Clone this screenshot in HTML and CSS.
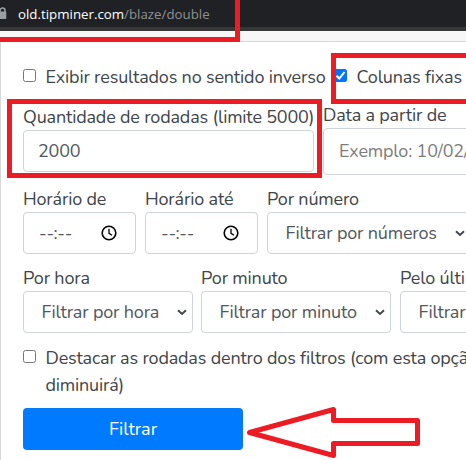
FILE: index.html
```html
<!DOCTYPE html>
<html lang="pt-BR">
<head>
<meta charset="utf-8">
<title>old.tipminer.com/blaze/double</title>
<link rel="stylesheet" href="styles.css">
</head>
<body>
<header class="browser-bar">
  <svg class="lock" width="10" height="13" viewBox="0 0 10 13"><path d="M2 5V3.500a2.500 2.500 0 0 1 5 0V5" fill="none" stroke="#9aa0a6" stroke-width="1.500"/><rect y="4.500" x="-2" width="8.300" height="7.500" rx="1" fill="#9aa0a6" transform="translate(2)"/></svg>
  <span class="url"><span class="host">old.tipminer.com</span><span class="path">/blaze/double</span></span>
</header>
<main class="panel">
  <div class="checks">
    <label class="check"><span class="box"></span><span class="text">Exibir resultados no sentido inverso</span></label>
    <label class="check"><span class="box checked"><svg width="13" height="13" viewBox="0 0 13 13"><path d="M2.5 6.7 5.3 9.5 10.5 3" fill="none" stroke="#fff" stroke-width="2"/></svg></span><span class="text">Colunas fixas</span></label>
  </div>
  <div class="row row-amount">
    <div class="field w-amount"><span class="label">Quantidade de rodadas (limite 5000)</span><div class="control"><span>2000</span></div></div>
    <div class="field w-date"><span class="label">Data a partir de</span><div class="control tall placeholder"><span>Exemplo: 10/02/2023</span></div></div>
  </div>
  <div class="row row-time">
    <div class="field w-time"><span class="label">Horário de</span><div class="control time"><span>--:--</span><svg class="clock" width="16" height="16" viewBox="0 0 16 16"><circle cx="8" cy="8" r="6.8"/><path d="M8 3.8V8.3l3 2"/></svg></div></div>
    <div class="field w-time"><span class="label">Horário até</span><div class="control time"><span>--:--</span><svg class="clock" width="16" height="16" viewBox="0 0 16 16"><circle cx="8" cy="8" r="6.8"/><path d="M8 3.8V8.3l3 2"/></svg></div></div>
    <div class="field w-number"><span class="label">Por número</span><div class="control select"><span>Filtrar por números</span><svg class="chevron" width="10" height="7" viewBox="0 0 10 7"><path d="M1 1.3 5 5l4-3.7"/></svg></div></div>
  </div>
  <div class="row row-filter">
    <div class="field w-hour"><span class="label">Por hora</span><div class="control select"><span>Filtrar por hora</span><svg class="chevron" width="10" height="7" viewBox="0 0 10 7"><path d="M1 1.3 5 5l4-3.7"/></svg></div></div>
    <div class="field w-minute"><span class="label">Por minuto</span><div class="control select"><span>Filtrar por minuto</span><svg class="chevron" width="10" height="7" viewBox="0 0 10 7"><path d="M1 1.3 5 5l4-3.7"/></svg></div></div>
    <div class="field w-last"><span class="label">Pelo último</span><div class="control select"><span>Filtrar</span></div></div>
  </div>
  <label class="check highlight"><span class="box"></span><span class="text">Destacar as rodadas dentro dos filtros (com esta opção<br>diminuirá)</span></label>
  <div class="submit">Filtrar</div>
</main>
<svg class="marks" width="466" height="460" viewBox="0 0 466 460">
  <path d="M0 39.5H237.5V0"/>
  <path d="M470 55.5H333.5V101.5H470"/>
  <rect x="9.5" y="101.5" width="310" height="74"/>
  <path stroke-linejoin="round" d="M249.5 432.5 333.5 409.5V420.5H417.5V443.5H333.5V455.5Z"/>
</svg>
</body>
</html>
```
FILE: styles.css
```css
* { box-sizing: border-box; }
body {
  margin: 0;
  width: 466px;
  height: 460px;
  overflow: hidden;
  position: relative;
  background: #f7f7f7;
  color: #40454a;
  font: 18px/27px Nunito, Lato, sans-serif;
  letter-spacing: -0.18px;
  white-space: nowrap;
}
.browser-bar {
  height: 31px;
  background: #202124;
  border-bottom: 4px solid #373737;
  display: flex;
  align-items: center;
  font: 13.3px/20px "Open Sans", sans-serif;
  letter-spacing: 0;
}
.lock { margin: 0 10px 0 -2px; }
.host { color: #fff; }
.path { color: #8d9195; }
.panel {
  margin-top: 10px;
  width: 466px;
  height: 419px;
  padding: 21px 0 0 22px;
  background: #fff;
  border: 1px solid #d8d8d8;
  border-width: 1px 0 0 1px;
  overflow: hidden;
}
.checks { display: flex; height: 27px; }
.check { display: flex; }
.checks .check:first-child { width: 311px; }
.text { padding-top: 1px; }
.box {
  flex: none;
  width: 13px;
  height: 13px;
  margin: 6px 9.5px 0 0;
  border: 1px solid #767676;
  border-radius: 2.5px;
  background: #fff;
}
.box.checked { border: 0; background: #0075ff; }
.box svg { display: block; }
.row { display: flex; gap: 9px; }
.row-amount { margin-top: 11px; height: 84px; }
.row-amount .w-amount { padding-top: 2px; }
.row-time { height: 79px; }
.row-filter { height: 80px; }
.field { flex: none; }
.label { display: block; height: 27px; padding-top: 1px; }
.control {
  display: flex;
  align-items: center;
  height: 42px;
  padding: 0 14px;
  border: 1px solid #ced4da;
  border-radius: 4px;
  color: #50575e;
  background: #fff;
}
.tall { height: 47px; padding: 0 15px; }
.placeholder { color: #7c7c7c; }
.time { justify-content: space-between; padding-right: 18px; padding-left: 15px; }
.select { justify-content: space-between; padding: 0 5px 0 17.5px; }
.clock { fill: none; stroke: #000; stroke-width: 1.6; }
.clock path { stroke-width: 1.3; }
.chevron { fill: none; stroke: #42484f; stroke-width: 2; }
.w-amount { width: 291px; }
.w-date { width: 210px; }
.w-time { width: 113px; }
.w-number { width: 204px; }
.w-hour { width: 170px; }
.w-minute { width: 190px; }
.row-filter .w-hour { margin-right: -1px; }
.w-last { width: 190px; }
.highlight { height: 64px; }
.submit {
  width: 220px;
  height: 42px;
  border-radius: 4px;
  background: #007bff;
  color: #fff;
  line-height: 43px;
  text-align: center;
  letter-spacing: 0;
}
.marks {
  position: absolute;
  left: 0;
  top: 0;
  fill: none;
  stroke: #ed1c24;
  stroke-width: 5;
}
```
